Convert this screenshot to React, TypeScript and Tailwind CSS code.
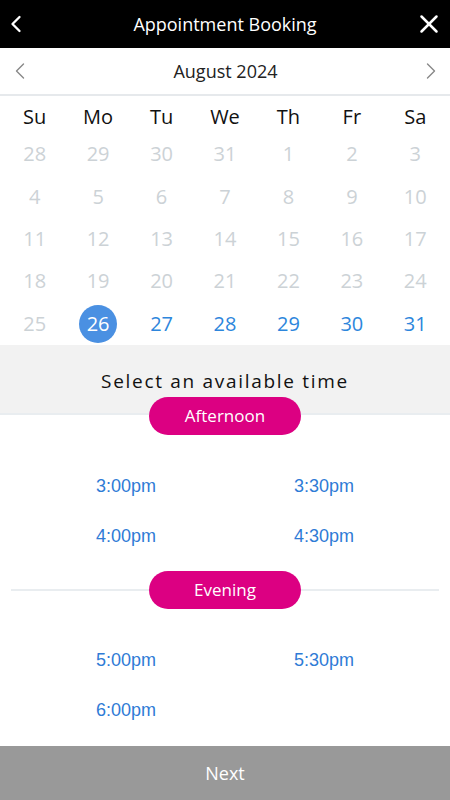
import { ChevronLeft, ChevronRight, X } from "lucide-react";

const WEEKDAYS = ["Su", "Mo", "Tu", "We", "Th", "Fr", "Sa"];

const WEEKS: number[][] = [
  [28, 29, 30, 31, 1, 2, 3],
  [4, 5, 6, 7, 8, 9, 10],
  [11, 12, 13, 14, 15, 16, 17],
  [18, 19, 20, 21, 22, 23, 24],
  [25, 26, 27, 28, 29, 30, 31],
];

const SLOTS = [
  { label: "Afternoon", times: ["3:00pm", "3:30pm", "4:00pm", "4:30pm"] },
  { label: "Evening", times: ["5:00pm", "5:30pm", "6:00pm"] },
];

function Pill({ label }: { label: string }) {
  return (
    <span className="flex h-[38px] w-[152px] items-center justify-center rounded-full bg-[#dc0082] text-[17px] text-white">
      {label}
    </span>
  );
}

function TimeGrid({ times }: { times: string[] }) {
  return (
    <div className="mt-[27px] grid grid-cols-2 px-[27px]">
      {times.map((t) => (
        <button
          key={t}
          className="flex h-[50px] items-center justify-center font-['Liberation_Sans',Arial,sans-serif] text-[18px] text-[#2f7bd6]"
        >
          {t}
        </button>
      ))}
    </div>
  );
}

export default function App() {
  return (
    <div className="flex h-[800px] w-[450px] flex-col bg-white font-['Open_Sans',sans-serif]">
      <header className="grid h-12 shrink-0 grid-cols-[48px_1fr_48px] items-center bg-black text-white">
        <span className="flex pl-[2px]">
          <ChevronLeft className="size-[28px]" strokeWidth={2} />
        </span>
        <h1 className="text-center text-[18px]">Appointment Booking</h1>
        <span className="flex justify-end pr-[6px]">
          <X className="size-[30px]" strokeWidth={2} />
        </span>
      </header>

      <div className="flex h-12 shrink-0 items-center justify-between border-b-2 border-[#e6e9ec] pl-[6px] pr-[5px]">
        <ChevronLeft className="size-[28px] text-[#888]" strokeWidth={1.2} />
        <span className="text-[18px] text-[#222]">August 2024</span>
        <ChevronRight className="size-[28px] text-[#888]" strokeWidth={1.2} />
      </div>

      <div className="grid h-[37px] shrink-0 grid-cols-7 items-end px-[3px] text-center text-[20px] text-[#111]">
        {WEEKDAYS.map((d) => (
          <span key={d} className="leading-[32px]">{d}</span>
        ))}
      </div>

      <div className="shrink-0 px-[3px]">
        {WEEKS.map((week, wi) => (
          <div key={wi} className="grid h-[42.4px] grid-cols-7 items-center text-center text-[20px]">
            {week.map((day) => {
              const available = wi === 4 && day >= 26;
              const selected = wi === 4 && day === 26;
              return (
                <span key={day} className="flex justify-center">
                  {selected ? (
                    <span className="flex size-[38px] items-center justify-center rounded-full bg-[#4a90e2] text-white">
                      {day}
                    </span>
                  ) : (
                    <span className={available ? "text-[#2d86dc]" : "text-[#ccd2d6]"}>{day}</span>
                  )}
                </span>
              );
            })}
          </div>
        ))}
      </div>

      <div className="flex h-[70px] shrink-0 items-center justify-center border-b-2 border-[#e9edf0] bg-[#f2f2f2] pt-[4px]">
        <p className="text-[19px] tracking-[1.7px] text-[#111]">Select an available time</p>
      </div>

      <div className="flex-1">
        <div className="-mt-[18px] flex justify-center">
          <Pill label={SLOTS[0].label} />
        </div>
        <TimeGrid times={SLOTS[0].times} />

        <div className="mt-[9px] flex items-center px-[11px]">
          <span className="h-[2px] flex-1 bg-[#e9edf0]" />
          <Pill label={SLOTS[1].label} />
          <span className="h-[2px] flex-1 bg-[#e9edf0]" />
        </div>
        <TimeGrid times={SLOTS[1].times} />
      </div>

      <button className="flex h-[54px] shrink-0 items-center justify-center bg-[#999999] text-[18px] text-white">
        Next
      </button>
    </div>
  );
}
